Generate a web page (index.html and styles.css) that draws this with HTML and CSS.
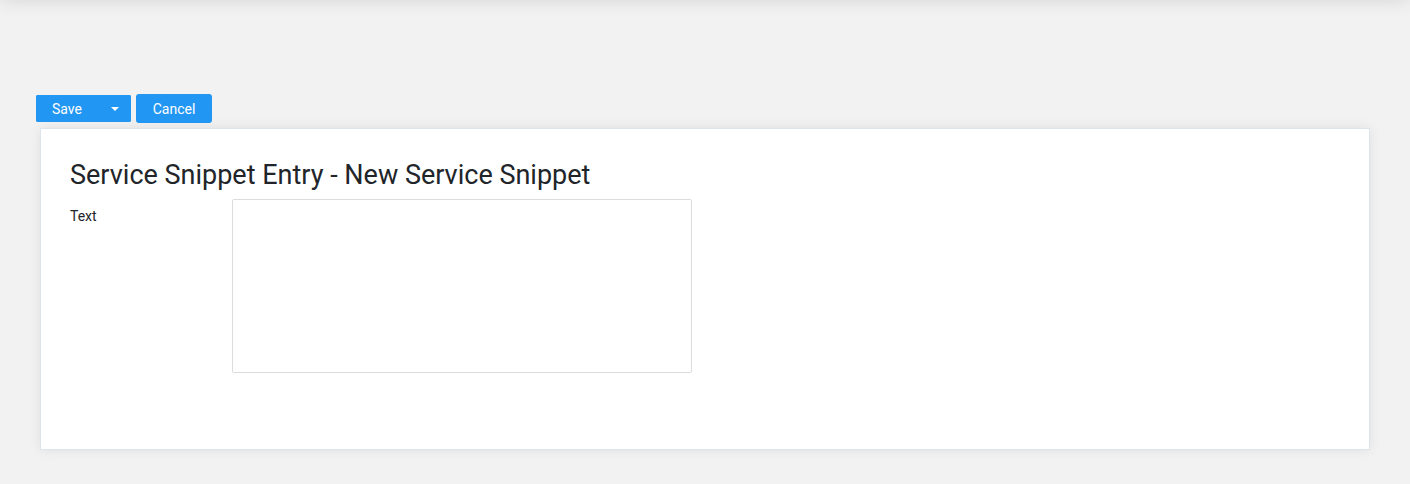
FILE: index.html
```html
<!DOCTYPE html>
<html>
<head>
<meta charset="utf-8">
<link rel="stylesheet" href="styles.css">
</head>
<body>
<div class="topbar"></div>
<main class="page">
  <div class="toolbar">
    <div class="split">
      <button class="btn btn-save">Save</button>
      <button class="btn btn-caret"><span class="caret"></span></button>
    </div>
    <button class="btn btn-cancel">Cancel</button>
  </div>
  <section class="card">
    <h1 class="title">Service Snippet Entry - New Service Snippet</h1>
    <div class="field">
      <label class="label">Text</label>
      <textarea class="textarea"></textarea>
    </div>
  </section>
</main>
</body>
</html>
```
FILE: styles.css
```css
html, body {
  margin: 0;
  padding: 0;
  background: #f2f2f2;
  font-family: Roboto, "Liberation Sans", sans-serif;
  color: #212529;
  height: 100%;
  overflow: hidden;
}
.topbar {
  position: fixed;
  top: -60px;
  left: 0;
  right: 0;
  height: 60px;
  background: #f2f2f2;
  box-shadow: 0 0 18px rgba(0, 0, 0, 0.12);
}
.page {
  padding: 94px 40px 0 36px;
}
.toolbar {
  display: flex;
  align-items: center;
  gap: 5px;
  height: 29px;
}
.split {
  display: flex;
  height: 27px;
  background: #2196f3;
  border-radius: 2px;
  width: 95px;
}
.btn {
  border: none;
  background: #2196f3;
  color: #fff;
  font-family: Roboto, "Liberation Sans", sans-serif;
  font-size: 14px;
  padding: 0;
  cursor: pointer;
}
.btn-save {
  width: 62px;
  text-align: left;
  padding-left: 16px;
  border-radius: 2px 0 0 2px;
}
.btn-caret {
  flex: 1;
  display: flex;
  align-items: center;
  justify-content: center;
  border-radius: 0 2px 2px 0;
}
.caret {
  width: 0;
  height: 0;
  border-left: 4px solid transparent;
  border-right: 4px solid transparent;
  border-top: 4px solid #fff;
  margin-top: 1px;
}
.btn-cancel {
  width: 76px;
  height: 29px;
  border-radius: 3px;
}
.card {
  margin: 5px 0 0 4px;
  background: #fff;
  border: 1px solid #dde4eb;
  box-shadow: 0 0 12px rgba(0, 0, 0, 0.08);
  height: 322px;
  box-sizing: border-box;
  padding: 30px 29px 0 29px;
  width: 1330px;
}
.title {
  margin: 0;
  font-size: 27px;
  font-weight: 400;
  line-height: 32px;
  color: #212529;
}
.field {
  display: flex;
  margin-top: 8px;
}
.label {
  width: 162px;
  font-size: 14px;
  padding-top: 9px;
  line-height: 17px;
  color: #212529;
}
.textarea {
  width: 460px;
  height: 174px;
  box-sizing: border-box;
  border: 1px solid #dcdcdc;
  border-radius: 2px;
  resize: none;
  margin: 0;
  font-family: Roboto, "Liberation Sans", sans-serif;
}
```
